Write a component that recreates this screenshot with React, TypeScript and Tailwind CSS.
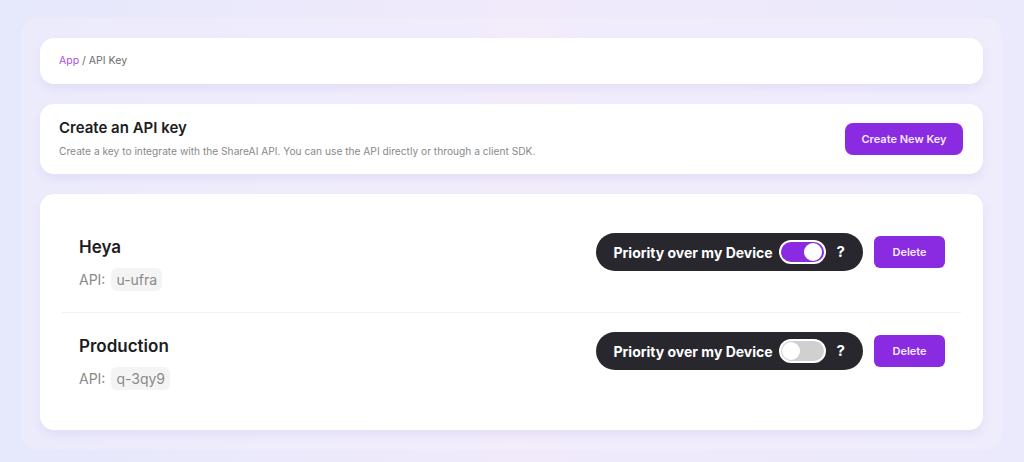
import React from 'react';

type ApiKey = { name: string; code: string; priority: boolean };

const keys: ApiKey[] = [
    { name: 'Heya', code: 'u-ufra', priority: true },
    { name: 'Production', code: 'q-3qy9', priority: false },
];

function Toggle({ on }: { on: boolean }) {
    return (
        <div
            className={
                on
                    ? 'flex h-[24px] w-[47px] items-center justify-end rounded-full border-2 border-white bg-[#8a2be2] px-[2px]'
                    : 'flex h-[24px] w-[47px] items-center justify-start rounded-full border-2 border-white bg-[#d0d0d0] px-[1px]'
            }
        >
            <div className="h-[18px] w-[18px] rounded-full bg-white" />
        </div>
    );
}

function KeyRow({ item, last }: { item: ApiKey; last: boolean }) {
    return (
        <div className={last ? 'flex items-start justify-between pb-[20px] pl-[17px] pr-[16px] pt-[21px]' : 'flex items-start justify-between border-b border-[#f2f2ee] pb-[21px] pl-[17px] pr-[16px] pt-[21px]'}>
            <div className="flex flex-col">
                <div className="text-[17px] font-semibold leading-[24px] text-[#1c1c22]">{item.name}</div>
                <div className="mt-[9px] flex items-center gap-[6px] text-[14px] text-[#8a8a8a]">
                    <span>API:</span>
                    <span className="rounded-[6px] bg-[#f4f4f4] px-[5px] py-[1px] leading-[21px]">{item.code}</span>
                </div>
            </div>
            <div className="mt-[-2px] flex items-center gap-[11px]">
                <div className="flex h-[38px] items-center rounded-full bg-[#27272d] pl-[17px] pr-[18px]">
                    <span className="text-[14px] font-bold text-white">Priority over my Device</span>
                    <div className="ml-[6px]">
                        <Toggle on={item.priority} />
                    </div>
                    <span className="ml-[11px] text-[15px] font-bold text-white">?</span>
                </div>
                <button className="h-[32px] w-[71px] rounded-[6px] bg-[#8a2be2] text-[11px] font-semibold text-[#f3eaff]">
                    Delete
                </button>
            </div>
        </div>
    );
}

export default function App() {
    return (
        <div
            className="min-h-screen bg-gradient-to-r from-[#e6e8fc] via-[#f0eafb] to-[#ebe9fc] pl-[21px] pr-[22px] pt-[18px]"
            style={{ fontFamily: '"Inter", "Open Sans", sans-serif' }}
        >
            <div className="flex h-[432px] flex-col gap-[20px] rounded-[18px] bg-[#f4f0fd]/40 px-[19px] pt-[20px]">
                {/* Breadcrumb */}
                <div className="flex h-[46px] items-center rounded-[14px] bg-white px-[19px] text-[10.5px] shadow-[0_5px_10px_rgba(120,100,200,0.09)]">
                    <span className="text-[#a152ee]">App</span>
                    <span className="ml-[3px] text-[#6b6b6b]">/ API Key</span>
                </div>

                {/* Create */}
                <div className="flex h-[70px] items-center justify-between rounded-[14px] bg-white pl-[19px] pr-[20px] shadow-[0_5px_10px_rgba(120,100,200,0.09)]">
                    <div className="flex flex-col">
                        <div className="text-[15px] font-semibold leading-[20px] text-[#1c1c22]">Create an API key</div>
                        <div className="mt-[6px] text-[10.2px] text-[#8a8a8a]">
                            Create a key to integrate with the ShareAI API. You can use the API directly or through a client SDK.
                        </div>
                    </div>
                    <button className="h-[32px] w-[118px] rounded-[8px] bg-[#8a2be2] text-[11px] font-semibold text-[#f3eaff]">
                        Create New Key
                    </button>
                </div>

                {/* Keys */}
                <div className="rounded-[14px] bg-white px-[22px] py-[20px] shadow-[0_5px_10px_rgba(120,100,200,0.09)]">
                    {keys.map((k, i) => (
                        <KeyRow key={k.name} item={k} last={i === keys.length - 1} />
                    ))}
                </div>
            </div>
        </div>
    );
}
